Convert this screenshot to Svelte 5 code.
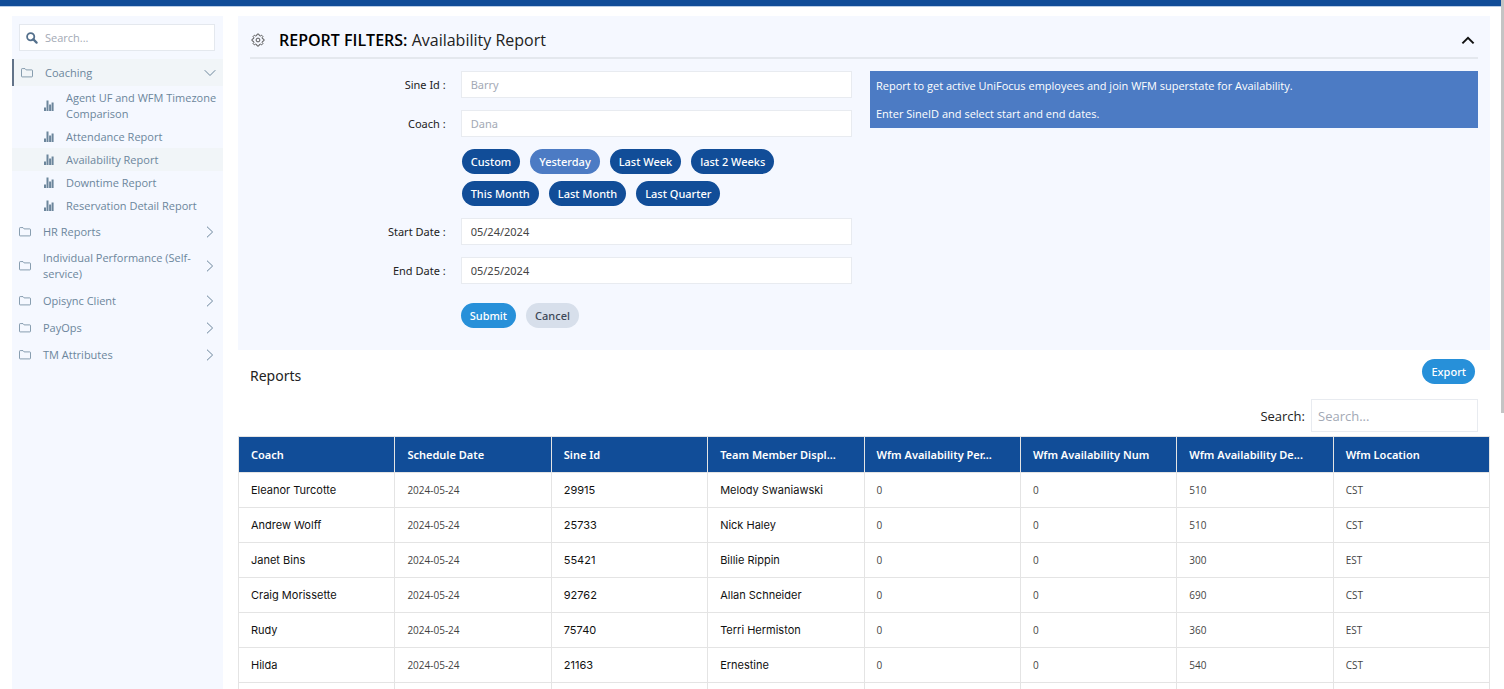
<script>
  let activeRange = 'Yesterday';
  let openFolder = 'Coaching';
  let showFilters = true;

  let sineId = '';
  let coach = '';
  let startDate = '05/24/2024';
  let endDate = '05/25/2024';
  let menuSearch = '';
  let tableSearch = '';

  const ranges = ['Custom', 'Yesterday', 'Last Week', 'last 2 Weeks', 'This Month', 'Last Month', 'Last Quarter'];

  const folders = [
    {
      name: 'Coaching',
      reports: [
        'Agent UF and WFM Timezone Comparison',
        'Attendance Report',
        'Availability Report',
        'Downtime Report',
        'Reservation Detail Report'
      ]
    },
    { name: 'HR Reports', reports: [] },
    { name: 'Individual Performance (Self-service)', reports: [] },
    { name: 'Opisync Client', reports: [] },
    { name: 'PayOps', reports: [] },
    { name: 'TM Attributes', reports: [] }
  ];

  const columns = [
    'Coach',
    'Schedule Date',
    'Sine Id',
    'Team Member Displ...',
    'Wfm Availability Per...',
    'Wfm Availability Num',
    'Wfm Availability De...',
    'Wfm Location'
  ];

  const rows = [
    { coach: 'Eleanor Turcotte', sine: '29915', member: 'Melody Swaniawski', de: 510, location: 'CST' },
    { coach: 'Andrew Wolff', sine: '25733', member: 'Nick Haley', de: 510, location: 'CST' },
    { coach: 'Janet Bins', sine: '55421', member: 'Billie Rippin', de: 300, location: 'EST' },
    { coach: 'Craig Morissette', sine: '92762', member: 'Allan Schneider', de: 690, location: 'CST' },
    { coach: 'Rudy', sine: '75740', member: 'Terri Hermiston', de: 360, location: 'EST' },
    { coach: 'Hilda', sine: '21163', member: 'Ernestine', de: 540, location: 'CST' }
  ];

  $: visibleRows = rows.filter((row) =>
    Object.values(row).join(' ').toLowerCase().includes(tableSearch.toLowerCase())
  );

  function toggleFolder(name) {
    openFolder = openFolder === name ? '' : name;
  }
</script>

<div class="app">
  <div class="topbar"></div>

  <div class="layout">
    <aside class="sidebar">
      <div class="menu-search">
        <svg viewBox="0 0 12 12" width="12" height="12" aria-hidden="true">
          <circle cx="4.7" cy="4.7" r="3.6" fill="none" stroke="currentColor" stroke-width="1.8" />
          <path d="M7.4 7.4L10.6 10.6" stroke="currentColor" stroke-width="2.2" stroke-linecap="round" />
        </svg>
        <input type="search" aria-label="Search menu" placeholder="Search..." bind:value={menuSearch} />
      </div>

      <nav>
        {#each folders as folder}
          <button class="folder" class:open={openFolder === folder.name} on:click={() => toggleFolder(folder.name)}>
            <svg viewBox="0 0 12 10" width="12" height="10" aria-hidden="true">
              <path d="M.5 8.2V1.3Q.5.6 1.2.6H4L5.1 1.9H10.8Q11.5 1.9 11.5 2.6V8.2Q11.5 8.9 10.8 8.9H1.2Q.5 8.9.5 8.2Z" fill="none" stroke="currentColor" stroke-width=".8" />
            </svg>
            <span>{folder.name}</span>
            <svg viewBox="0 0 12 12" width="12" height="12" aria-hidden="true">
              <path d={openFolder === folder.name ? 'M.7 3.2L6 8.5L11.3 3.2' : 'M3 .7L8.6 6L3 11.3'} fill="none" stroke="currentColor" />
            </svg>
          </button>
          {#if openFolder === folder.name && folder.reports.length}
            <ul>
              {#each folder.reports as report}
                <li class:selected={report === 'Availability Report'}>
                  <a href="#report">
                    <svg viewBox="0 0 10 12" width="10" height="12" aria-hidden="true">
                      <path d="M0 7.5h2V11H0zM2.5.5h2V11h-2zM5.1 4.5h2V11h-2zM7.6 2.5h2V11h-2z" fill="currentColor" />
                    </svg>
                    <span>{report}</span>
                  </a>
                </li>
              {/each}
            </ul>
          {/if}
        {/each}
      </nav>
    </aside>

    <main>
      <section class="filters">
        <header>
          <svg class="gear" viewBox="0 0 14 14" width="14" height="14" fill="none" stroke="currentColor" aria-hidden="true">
            <path d="M6.1 1.1h1.8l.4 1.5 1 .4 1.3-.8 1.3 1.3-.8 1.3.4 1 1.5.4v1.7l-1.5.4-.4 1 .8 1.3-1.3 1.3-1.3-.8-1 .4-.4 1.5H6.1l-.4-1.5-1-.4-1.3.8-1.3-1.3.8-1.3-.4-1L1 7.9V6.2l1.5-.4.4-1-.8-1.3 1.3-1.3 1.3.8 1-.4z" stroke-width=".9" stroke-linejoin="round" />
            <circle cx="7" cy="7" r="1.9" stroke-width=".9" />
          </svg>
          <h1><b>REPORT FILTERS:</b> Availability Report</h1>
          <button class="collapse" aria-label="Toggle filters" on:click={() => (showFilters = !showFilters)}>
            <svg viewBox="0 0 14 9" width="14" height="9" aria-hidden="true">
              <path d="M1.4 7.4L7 1.9L12.6 7.4" fill="none" stroke="currentColor" stroke-width="2" />
            </svg>
          </button>
        </header>

        {#if showFilters}
          <div class="filter-body">
            <form on:submit|preventDefault>
              <label for="sine-id">Sine Id :</label>
              <input id="sine-id" type="text" placeholder="Barry" bind:value={sineId} />

              <label for="coach">Coach :</label>
              <input id="coach" type="text" placeholder="Dana" bind:value={coach} />

              <div class="ranges">
                {#each ranges as range}
                  <button type="button" class="pill" class:active={activeRange === range} on:click={() => (activeRange = range)}>{range}</button>
                {/each}
              </div>

              <label for="start-date">Start Date :</label>
              <input id="start-date" type="text" bind:value={startDate} />

              <label for="end-date">End Date :</label>
              <input id="end-date" type="text" bind:value={endDate} />

              <div class="actions">
                <button type="submit" class="pill primary">Submit</button>
                <button type="button" class="pill cancel">Cancel</button>
              </div>
            </form>

            <div class="info">
              <p>Report to get active UniFocus employees and join WFM superstate for Availability.</p>
              <p>Enter SineID and select start and end dates.</p>
            </div>
          </div>
        {/if}
      </section>

      <section class="reports">
        <div class="reports-head">
          <h2>Reports</h2>
          <button class="pill primary">Export</button>
        </div>

        <div class="table-search">
          <label for="table-search">Search:</label>
          <input id="table-search" type="search" placeholder="Search..." bind:value={tableSearch} />
        </div>

        <table>
          <thead>
            <tr>
              {#each columns as column}
                <th>{column}</th>
              {/each}
            </tr>
          </thead>
          <tbody>
            {#each visibleRows as row}
              <tr>
                <td class="name">{row.coach}</td>
                <td>2024-05-24</td>
                <td class="name">{row.sine}</td>
                <td class="name">{row.member}</td>
                <td>0</td>
                <td>0</td>
                <td>{row.de}</td>
                <td>{row.location}</td>
              </tr>
            {/each}
            <tr>
              {#each columns as _}
                <td></td>
              {/each}
            </tr>
          </tbody>
        </table>
      </section>
    </main>
  </div>

  <div class="scroll-thumb"></div>
</div>

<style>
  :global(body) {
    background: #fff;
    color: #222;
    font-family: 'Noto Sans', 'Open Sans', sans-serif;
    font-size: 11px;
  }

  .app {
    position: relative;
    display: flex;
    flex-direction: column;
    height: 100vh;
    overflow: hidden;
  }

  .topbar {
    flex: none;
    height: 6px;
    background: #114d98;
    border-bottom: 1px solid #b9cde6;
  }

  .layout {
    flex: 1;
    display: flex;
    gap: 15px;
    min-height: 0;
    padding: 9px 14px 0 12px;
  }

  button,
  input {
    font: inherit;
    box-sizing: border-box;
  }

  button {
    border: none;
    cursor: pointer;
  }

  input {
    min-width: 0;
    border: 1px solid #e8ebf0;
    background: #fff;
    color: #444;
    outline: none;
  }

  input::placeholder {
    color: #a3a9b5;
    opacity: 1;
  }

  /* Sidebar */
  .sidebar {
    flex: none;
    width: 211px;
    background: #f5f8ff;
    color: #6c869c;
    font-family: 'Open Sans', sans-serif;
    line-height: 16px;
  }

  .menu-search {
    display: flex;
    align-items: center;
    gap: 5px;
    height: 27px;
    margin: 8px 8px 8px 7px;
    padding-left: 6px;
    box-sizing: border-box;
    background: #fff;
    border: 1px solid #e4e8ee;
  }

  .menu-search svg {
    flex: none;
    color: #54708c;
  }

  .menu-search input {
    flex: 1;
    padding: 0 2px;
    border: none;
  }

  .folder {
    display: flex;
    align-items: center;
    gap: 12px;
    width: 100%;
    min-height: 27px;
    padding: 5px 7px;
    background: none;
    color: inherit;
    text-align: left;
  }

  .folder span {
    flex: 1;
  }

  .folder svg {
    flex: none;
  }

  .folder.open {
    border-left: 2px solid #627389;
    background: #f1f5f8;
  }

  ul {
    list-style: none;
    margin: 0;
    padding: 1px 0;
  }

  li a {
    display: flex;
    align-items: center;
    gap: 12px;
    min-height: 23px;
    padding: 3px 4px 3px 32px;
    box-sizing: border-box;
    color: inherit;
    text-decoration: none;
  }

  li svg {
    flex: none;
  }

  .selected {
    background: #f1f5f8;
  }

  /* Filters */
  main {
    flex: 1;
    min-width: 0;
  }

  .filters {
    padding: 0 12px 22px;
    background: #f5f8ff;
  }

  .filters header {
    display: flex;
    align-items: center;
    height: 41px;
    border-bottom: 2px solid #e4e8ee;
  }

  .gear {
    flex: none;
    margin: 6px 14px 0 1px;
    color: #444;
  }

  h1 {
    flex: 1;
    margin: 7px 0 0;
    font-family: 'Open Sans', sans-serif;
    font-size: 16px;
    line-height: 22px;
    font-weight: 400;
  }

  h1 b {
    font-weight: 600;
    color: #000;
  }

  .collapse {
    display: flex;
    margin-top: 8px;
    padding: 2px 3px;
    background: none;
    color: #111;
  }

  .filter-body {
    display: grid;
    grid-template-columns: 1fr 1fr;
    align-items: start;
    padding-top: 12px;
  }

  form {
    display: grid;
    grid-template-columns: 35% 65%;
    row-gap: 12px;
    align-items: center;
    padding-right: 12px;
  }

  form label {
    padding-right: 15px;
    text-align: right;
  }

  form input {
    height: 27px;
    padding: 0 9px;
  }

  .ranges,
  .actions {
    grid-column: 2;
    display: flex;
    flex-wrap: wrap;
    gap: 7px 10px;
  }

  .ranges {
    padding: 0 70px 0 1px;
  }

  .actions {
    margin-top: 7px;
  }

  .pill {
    height: 25px;
    padding: 0 9px;
    border-radius: 13px;
    background: #114d98;
    color: #fff;
    font-weight: 500;
  }

  .pill.active {
    background: #4c7bc4;
  }

  .pill.primary {
    background: #2790d9;
  }

  .pill.cancel {
    background: #d7dfeb;
    color: #3d4857;
  }

  .info {
    display: grid;
    gap: 14px;
    margin-left: 6px;
    padding: 8px 6px 7px;
    background: #4c7bc4;
    color: #fff;
    font-family: 'Open Sans', sans-serif;
    line-height: 14px;
  }

  .info p {
    margin: 0;
  }

  /* Report table */
  .reports-head {
    display: flex;
    justify-content: space-between;
    padding: 9px 15px 0 12px;
  }

  h2 {
    margin: 7px 0 0;
    font-size: 14px;
    line-height: 20px;
    font-weight: 400;
  }

  .table-search {
    display: flex;
    justify-content: flex-end;
    align-items: center;
    gap: 6px;
    padding: 13px 12px 4px;
    font-family: 'Open Sans', sans-serif;
    font-size: 13px;
  }

  .table-search input {
    width: 167px;
    height: 33px;
    padding: 0 6px;
  }

  table {
    width: 100%;
    table-layout: fixed;
    border-collapse: collapse;
  }

  th,
  td {
    height: 35px;
    padding: 0 12px;
    box-sizing: border-box;
    border: 1px solid #e4e4e4;
    text-align: left;
    white-space: nowrap;
  }

  th {
    height: 36px;
    background: #114d98;
    color: #fff;
    font-weight: 600;
  }

  td {
    color: #444;
    font-family: 'Open Sans', sans-serif;
    font-size: 10px;
  }

  td.name {
    color: #111;
    font-family: Inter, sans-serif;
    font-size: 11px;
  }

  .scroll-thumb {
    position: absolute;
    top: 0;
    right: 0;
    width: 3px;
    height: 60%;
    background: #c4c4c4;
  }
</style>
